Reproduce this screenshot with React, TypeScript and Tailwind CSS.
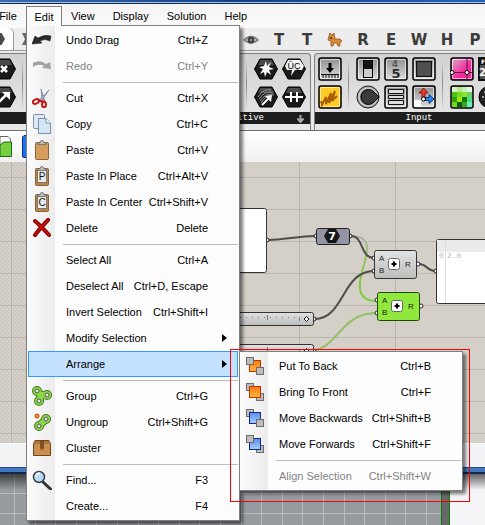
import type { ReactNode } from "react";

interface Entry {
  label: string;
  keys?: string;
  icon?: ReactNode;
  disabled?: boolean;
  active?: boolean;
  submenu?: Section[];
  arrow?: boolean;
}

type Section = Entry[];

const ArrowIcon = ({ back }: { back?: boolean }) => (
  <svg width="20" height="20" viewBox="0 0 20 20">
    {back ? (
      <path d="M1 7 Q8 3 14 8 L18 6 L19 13 L10 12 L12 10 Q7 7 1 11 Z" fill="#a2a2a2" />
    ) : (
      <path d="M19 6 Q12 4 6 8 L3 6 L0 14 L10 13 L8 11 Q13 8 18 11 Z" fill="#2b2b2b" stroke="#111" strokeWidth="0.5" />
    )}
  </svg>
);

const CutIcon = () => (
  <svg width="20" height="20" viewBox="0 0 20 20">
    <path d="M9 1 L13 13 L10 12 Z" fill="#8c9bb0" stroke="#6a7890" strokeWidth="0.6" />
    <path d="M17 2 L9 14 L7 12 Z" fill="#a9b6c8" stroke="#6a7890" strokeWidth="0.6" />
    <ellipse cx="4" cy="13.500" rx="3.300" ry="2" fill="none" stroke="#c81414" strokeWidth="2" transform="rotate(-25 4 13.500)" />
    <ellipse cx="12" cy="16.500" rx="2" ry="2.800" fill="none" stroke="#c81414" strokeWidth="2" />
    <path d="M6 12 L11 14" stroke="#c81414" strokeWidth="2" />
  </svg>
);

const CopyIcon = () => (
  <svg width="20" height="20" viewBox="0 0 20 20">
    <rect x="1.500" y="0.500" width="11" height="14" rx="1" fill="#dfe9f3" stroke="#7990a8" />
    <path d="M6.500 4.500 H14 L18.500 9 V19.500 H6.500 Z" fill="#d3e6f6" stroke="#7990a8" />
    <path d="M14 4.500 V9 H18.500" fill="#fff" stroke="#7990a8" />
  </svg>
);

const PasteIcon = ({ mark }: { mark?: string }) => (
  <svg width="20" height="20" viewBox="0 0 20 20">
    <rect x="3.500" y="2.500" width="13" height="17" rx="1" fill={mark ? "#b98548" : "#d69d5c"} stroke="#8d6230" />
    {mark && <rect x="5.500" y="4.500" width="9" height="12" fill="#ececec" stroke="#777" />}
    <path d="M5.500 4.500 V3 H8 Q8 0.500 10 0.500 Q12 0.500 12 3 H14.500 V4.500 Z" fill="#c4c4c4" stroke="#777" />
    {mark && (
      <text x="10" y="14" textAnchor="middle" fontSize="10" fontFamily="Liberation Sans, sans-serif" fill="#111">
        {mark}
      </text>
    )}
  </svg>
);

const DeleteIcon = () => (
  <svg width="20" height="20" viewBox="0 0 20 20">
    <path d="M3 3 Q9 8 17 17 M16 2 Q9 9 3 17" fill="none" stroke="#7d0000" strokeWidth="4" strokeLinecap="round" />
    <path d="M3 3 Q9 8 17 17 M16 2 Q9 9 3 17" fill="none" stroke="#c40c0c" strokeWidth="2" strokeLinecap="round" />
  </svg>
);

const GroupIcon = ({ split }: { split?: boolean }) => {
  const dots = split ? [[14, 7], [7, 14]] : [[5, 5], [15, 9], [7, 15]];
  const line = split ? "M14 7 L7 14" : "M5 5 L9 9 L15 9 M9 9 L7 15";
  return (
    <svg width="20" height="20" viewBox="0 0 20 20">
      <path d={line} fill="none" stroke="#3d7a17" strokeWidth="8" />
      {dots.map(([x, y]) => (
        <circle key={x} cx={x} cy={y} r="5" fill="#3d7a17" />
      ))}
      <path d={line} fill="none" stroke="#8dd645" strokeWidth="6" />
      {dots.map(([x, y]) => (
        <g key={x}>
          <circle cx={x} cy={y} r="4" fill="#8dd645" />
          <circle cx={x} cy={y} r="2" fill="#e4e4e4" stroke="#4d5b55" />
        </g>
      ))}
      {split && <circle cx="5" cy="4" r="2" fill="#ff8a1e" stroke="#c63c10" />}
    </svg>
  );
};

const ClusterIcon = () => (
  <svg width="20" height="20" viewBox="0 0 20 20">
    <path d="M3 2.500 H17 L18.500 6 V17.500 H1.500 V6 Z" fill="#cb8f51" stroke="#70441c" />
    <path d="M3 3 H17 L18 6 H2 Z" fill="#b0763c" />
    <path d="M8 3 H12 V12 L11 10 L10 13 L9 10 L8 12 Z" fill="#824f22" />
  </svg>
);

const FindIcon = () => (
  <svg width="20" height="20" viewBox="0 0 20 20">
    <path d="M11 12 L18.500 19" stroke="#333" strokeWidth="3" strokeLinecap="round" />
    <circle cx="7" cy="7" r="5.500" fill="#b7dcf8" stroke="#394048" strokeWidth="1.500" />
    <path d="M3.500 7 A3.500 3.500 0 0 1 8 3.500" stroke="#fff" strokeWidth="1.500" fill="none" />
  </svg>
);

// one coloured sheet stacked with two grey ones
const OrderIcon = ({ blue, over }: { blue?: boolean; over: "none" | "both" | "first" | "last" }) => {
  const id = blue ? "sheet-blue" : "sheet-orange";
  const first = <rect key="a" x="1.500" y="1.500" width="7" height="7" fill="#bdbdbd" stroke="#6c6c6c" />;
  const last = <rect key="b" x="11.500" y="11.500" width="7" height="7" fill="#bdbdbd" stroke="#6c6c6c" />;
  const sheet = (
    <rect key="c" x="4.500" y="4.500" width="11" height="11" fill={`url(#${id})`} stroke={blue ? "#142a80" : "#b43a00"} />
  );
  const order = {
    none: [sheet, first, last],
    both: [first, last, sheet],
    first: [first, sheet, last],
    last: [last, sheet, first],
  };
  return (
    <svg width="20" height="20" viewBox="0 0 20 20">
      <defs>
        <linearGradient id={id} x1="0" y1="0" x2="0" y2="1">
          <stop offset="0" stopColor={blue ? "#5a8cf0" : "#ff7a10"} />
          <stop offset="1" stopColor={blue ? "#a4d0ff" : "#ffb640"} />
        </linearGradient>
      </defs>
      {order[over]}
    </svg>
  );
};

const arrangeMenu: Section[] = [
  [
    { label: "Put To Back", keys: "Ctrl+B", icon: <OrderIcon over="none" /> },
    { label: "Bring To Front", keys: "Ctrl+F", icon: <OrderIcon over="both" /> },
    { label: "Move Backwards", keys: "Ctrl+Shift+B", icon: <OrderIcon blue over="first" /> },
    { label: "Move Forwards", keys: "Ctrl+Shift+F", icon: <OrderIcon blue over="last" /> },
  ],
  [{ label: "Align Selection", keys: "Ctrl+Shift+W", disabled: true }],
];

const editMenu: Section[] = [
  [
    { label: "Undo Drag", keys: "Ctrl+Z", icon: <ArrowIcon /> },
    { label: "Redo", keys: "Ctrl+Y", icon: <ArrowIcon back />, disabled: true },
  ],
  [
    { label: "Cut", keys: "Ctrl+X", icon: <CutIcon /> },
    { label: "Copy", keys: "Ctrl+C", icon: <CopyIcon /> },
    { label: "Paste", keys: "Ctrl+V", icon: <PasteIcon /> },
    { label: "Paste In Place", keys: "Ctrl+Alt+V", icon: <PasteIcon mark="P" /> },
    { label: "Paste In Center", keys: "Ctrl+Shift+V", icon: <PasteIcon mark="C" /> },
    { label: "Delete", keys: "Delete", icon: <DeleteIcon /> },
  ],
  [
    { label: "Select All", keys: "Ctrl+A" },
    { label: "Deselect All", keys: "Ctrl+D, Escape" },
    { label: "Invert Selection", keys: "Ctrl+Shift+I" },
    { label: "Modify Selection", arrow: true },
    { label: "Arrange", arrow: true, active: true, submenu: arrangeMenu },
  ],
  [
    { label: "Group", keys: "Ctrl+G", icon: <GroupIcon /> },
    { label: "Ungroup", keys: "Ctrl+Shift+G", icon: <GroupIcon split /> },
    { label: "Cluster", icon: <ClusterIcon /> },
  ],
  [
    { label: "Find...", keys: "F3", icon: <FindIcon /> },
    { label: "Create...", keys: "F4" },
  ],
];

const MenuRow = ({ entry }: { entry: Entry }) => (
  <li className="relative px-px">
    <button
      disabled={entry.disabled}
      className={`flex h-[26px] w-full items-center border text-left whitespace-nowrap ${
        entry.active ? "border-[#3399ff] bg-[#c4e1ff]" : "border-transparent"
      } ${entry.disabled ? "text-[#838383]" : "text-black"}`}
    >
      <span className="flex w-[26px] shrink-0 justify-center">{entry.icon}</span>
      <span className="flex-1 pl-[11px]">{entry.label}</span>
      <span>{entry.keys}</span>
      <span className="w-[29px] shrink-0 pl-[14px]">
        {entry.arrow && (
          <svg width="5" height="8" viewBox="0 0 5 8">
            <path d="M0 0 L5 4 L0 8 Z" />
          </svg>
        )}
      </span>
    </button>
    {entry.submenu && (
      <div className="absolute top-0 left-full">
        <Menu sections={entry.submenu} className="w-[224px]" />
        <div className="pointer-events-none absolute -top-[2px] -right-[7px] -bottom-[11px] -left-[9px] border border-[#ff0000]" />
      </div>
    )}
  </li>
);

const Menu = ({ sections, className }: { sections: Section[]; className: string }) => (
  <div
    className={`border border-[#808080] bg-[#fdfdfd] bg-linear-to-r from-[#fbfbfb] to-[#ececec] bg-[length:28px_100%] bg-no-repeat py-px shadow-[3px_3px_3px_rgba(0,0,0,0.5)] ${className}`}
  >
    {sections.map((section, i) => (
      <div key={i}>
        {i > 0 && (
          <div className="flex h-[6px] items-center pr-px pl-9">
            <hr className="w-full border-[#bdbdbd]" />
          </div>
        )}
        <ul>
          {section.map((entry) => (
            <MenuRow key={entry.label} entry={entry} />
          ))}
        </ul>
      </div>
    ))}
  </div>
);

const MenuBar = () => (
  <nav className="-ml-[10px] flex h-6 items-start bg-linear-to-b from-[#f4f4f4] to-[#fbfbfb] pt-[2px]">
    <button className="h-5 w-9">File</button>
    <div className="relative z-20">
      <button className="relative z-10 h-5 w-9 border border-b-0 border-[#808080] bg-[#fbfbfb]">Edit</button>
      <div className="absolute top-[19px] left-0">
        <Menu sections={editMenu} className="w-[214px]" />
      </div>
    </div>
    {["View", "Display", "Solution", "Help"].map((name) => (
      <button key={name} className="h-5 px-[9px]">{name}</button>
    ))}
  </nav>
);

const EyeIcon = () => (
  <svg width="16" height="12" viewBox="0 0 16 12">
    <path d="M1 6 Q8 -1 15 6 Q8 12 1 6 Z" fill="#d0d0d0" stroke="#777" strokeWidth="1.500" />
    <circle cx="8" cy="6" r="3.500" fill="#444" />
    <circle cx="8" cy="6" r="1" fill="#aaa" />
  </svg>
);

const Deer = () => (
  <svg width="16" height="16" viewBox="0 0 16 16">
    <path d="M2 4 L3 1 L5 3 L7 1 L8 7 L13 7 L15 9 L13 10 L13 14 L11 14 L10 11 L7 11 L6 14 L4 14 L4 9 L1 8 Z" fill="#d98a34" stroke="#92551c" strokeWidth="0.800" />
    <circle cx="4" cy="6" r="1" fill="#333" />
  </svg>
);

const tabs: ReactNode[] = ["", "", "", "", "", "", "", <EyeIcon />, "T", "T", <Deer />, "R", "E", "W", "H", "P"];

const TabStrip = () => (
  <div className="flex h-[23px] overflow-hidden border-b border-[#999] bg-[#ededed]">
    <button aria-label="Params" className="-ml-[15px] flex w-[29px] shrink-0 items-center justify-end rounded-tr-md border-r border-[#999] bg-white pr-[8px]">
      <svg width="13" height="12" viewBox="0 0 13 12">
        <path d="M3.500 0 H9.500 L13 6 L9.500 12 H3.500 L0 6 Z" fill="#4a4a4a" />
      </svg>
    </button>
    <button aria-label="Maths" className="flex w-[27px] shrink-0 items-center pl-[7px]">
      <svg width="14" height="12" viewBox="0 0 14 12">
        <path d="M1 0 H5 L7 3 L9 0 H13 L9 6 L13 12 H9 L7 9 L5 12 H1 L4 6 Z" fill="#666" />
      </svg>
    </button>
    {tabs.map((tab, i) => (
      <button
        key={i}
        className="flex w-7 shrink-0 items-center justify-center pt-px font-['DejaVu_Sans'] text-[15px] leading-[22px] font-bold text-[#3b3b3b]"
      >
        {tab}
      </button>
    ))}
  </div>
);

const Hex = ({ children }: { children?: ReactNode }) => (
  <svg width="24" height="24" viewBox="0 0 24 24">
    <path d="M6 2 H18 L23.500 12 L18 22 H6 L0.500 12 Z" fill="#1a1a1a" stroke="#000" strokeLinejoin="round" />
    <path d="M6.500 3 H17.500 L20 8 H4 Z" fill="#4a4a4a" />
    {children}
  </svg>
);

const Tile = ({ fill = "url(#tile-grey)", children }: { fill?: string; children?: ReactNode }) => (
  <svg width="24" height="24" viewBox="0 0 24 24">
    <defs>
      <linearGradient id="tile-grey" x1="0" y1="0" x2="0" y2="1">
        <stop offset="0" stopColor="#8f8f8f" />
        <stop offset="1" stopColor="#dedede" />
      </linearGradient>
      <linearGradient id="tile-pink" x1="0" y1="0" x2="1" y2="1">
        <stop offset="0" stopColor="#d8b4c8" />
        <stop offset="0.600" stopColor="#f4289c" />
        <stop offset="1" stopColor="#ff2ca0" />
      </linearGradient>
    </defs>
    <rect x="1" y="1" width="22" height="22" rx="2" fill={fill} stroke="#000" strokeWidth="1.500" />
    <rect x="2.500" y="2.500" width="19" height="19" rx="1" fill="none" stroke="#fff" strokeOpacity="0.600" />
    {children}
  </svg>
);

const greens = ["#d9f5c8", "#b3e886", "#c9f0b8", "#e4fae0", "#4fc318", "#76dc1c", "#8ce22e", "#69d06a", "#2ea30d", "#a4e80c", "#137a0c", "#4fe07c", "#74d81c", "#0b5a0a", "#38a818", "#66f0b8"];

const Knob = () => (
  <svg width="24" height="24" viewBox="0 0 24 24">
    <circle cx="12" cy="12" r="11" fill="#a4a4a4" stroke="#222" />
    <circle cx="12" cy="12" r="9" fill="none" stroke="#ddd" />
    <path d="M18 7 L23 12 L18 17 A7.500 7.500 0 1 1 18 7 Z" fill="#3a3a3a" stroke="#000" />
  </svg>
);

const IconColumn = ({ icons }: { icons: ReactNode[] }) => (
  <div className="flex shrink-0 flex-col gap-1">
    {icons.map((icon, i) => (
      <button key={i} className="h-6 w-6">{icon}</button>
    ))}
  </div>
);

const Divider = () => <div className="w-px shrink-0 bg-linear-to-b from-[#ddd] via-[#8a8a8a] to-[#ddd]" />;

const PanelTitle = ({ children }: { children: ReactNode }) => (
  <div className="flex h-3 items-center bg-[#1e1e1e] font-['Liberation_Mono'] text-[9px] leading-3 text-white">
    {children}
  </div>
);

const PrimitivePanel = () => (
  <section className="w-[311px] shrink-0 overflow-hidden rounded-tr border-t border-r border-[#808080] bg-linear-to-b from-[#d2d2d2] to-[#e9e9e9]">
    <div className="-ml-2 flex h-[58px] justify-between pt-[3px] pr-1">
      <div className="flex h-[52px] gap-[6px]">
        <IconColumn
          icons={[
            <Hex><path d="M9 9 L15 15 M15 9 L9 15" stroke="#fff" strokeWidth="2.500" /></Hex>,
            <Hex>
              <path d="M7 17 L14 10" stroke="#fff" strokeWidth="2.500" />
              <path d="M10 7 H18 V15 Z" fill="#fff" />
            </Hex>,
          ]}
        />
        <Divider />
      </div>
      <div className="flex h-[52px] gap-1">
        <div className="mr-[3px] flex"><Divider /></div>
        <IconColumn
          icons={[
            <Hex>
              <path d="M12 4 L13 9 L17 5 L15 10 L20 12 L15 13 L17 18 L13 15 L11 20 L10 15 L6 17 L9 12 L5 10 L10 9 Z" fill="#fff" />
            </Hex>,
            <Hex>
              <path d="M4 12 Q10 3 17 5 M5 14 Q11 5 19 8 M6 16 Q12 7 20 10 M7 18 Q12 10 16 11" stroke="#999" fill="none" />
              <path d="M8 20 L16 12" stroke="#fff" strokeWidth="2" />
              <path d="M11 11 L18 10 L17 17 Z" fill="#fff" />
            </Hex>,
          ]}
        />
        <IconColumn
          icons={[
            <Hex>
              <path d="M6 3 H18 L22 9 L20 13 H13 L9 19 L10 13 H5 L3 9 Z" fill="#f4f4f4" />
              <text x="12" y="12" textAnchor="middle" fontSize="9" fontFamily="Liberation Sans, sans-serif">ÜÇ</text>
            </Hex>,
            <Hex><path d="M3 12 H21 M9 7 V17 M15 7 V17" stroke="#fff" strokeWidth="2" /></Hex>,
          ]}
        />
      </div>
    </div>
    <PanelTitle>
      <span className="flex-1 pr-[32px] text-right">Primitive</span>
      <span className="w-[14px]">
        <svg width="9" height="9" viewBox="0 0 9 9">
          <path d="M4.500 1 V7 M1.500 4.500 L4.500 8 L7.500 4.500" stroke="#aaa" strokeWidth="2" fill="none" />
        </svg>
      </span>
    </PanelTitle>
  </section>
);

const InputPanel = () => (
  <section className="min-w-0 flex-1 overflow-hidden rounded-tl border-t border-l border-[#808080] bg-linear-to-b from-[#d2d2d2] to-[#e9e9e9]">
    <div className="flex h-[58px] pt-[3px] pl-[3px]">
      <div className="flex h-[52px] gap-1">
        <IconColumn
          icons={[
            <Tile>
              <path d="M3 17.500 H21 M5 18 V21 M8 18 V21 M11 18 V21 M14 18 V21 M17 18 V21 M20 18 V21" stroke="#111" />
              <path d="M10.500 6 H13.500 V11 H16 L12 16 L8 11 H10.500 Z" />
            </Tile>,
            <Tile fill="#ffcc26"><path d="M3 16 L4 20 L8 12 L8 19 L13 8 L11 18 L17 6 L14 16 L19 11" stroke="#a95c00" strokeWidth="2" fill="none" /></Tile>,
          ]}
        />
        <div className="mr-[3px] ml-[2px] flex"><Divider /></div>
        <IconColumn
          icons={[
            <Tile>
              <rect x="7.500" y="3.500" width="9" height="17" fill="#ccc" stroke="#000" />
              <rect x="8" y="4" width="8" height="8" fill="#151515" />
            </Tile>,
            <Knob />,
          ]}
        />
        <IconColumn
          icons={[
            <Tile>
              <g fontFamily="DejaVu Sans, sans-serif" fontWeight="bold" textAnchor="middle">
                <text x="11" y="10" fontSize="9" fill="#5a5a5a">4</text>
                <text x="12" y="21" fontSize="13" fill="#2c2c2c">5</text>
              </g>
            </Tile>,
            <Tile><path d="M4.500 4.500 H19.500 V8.500 H4.500 Z M4.500 10.500 H19.500 V13.500 H4.500 Z M4.500 15.500 H19.500 V19.500 H4.500 Z" fill="#ddd" stroke="#111" /></Tile>,
          ]}
        />
        <IconColumn
          icons={[
            <Tile><rect x="4.500" y="4.500" width="15" height="15" fill="#444" stroke="#111" /><rect x="6" y="6" width="12" height="12" fill="#505050" /></Tile>,
            <Tile>
              <path d="M2 15 H9 V22 H2 Z" fill="#fff" />
              <path d="M10 13 V8 H7 L11.500 3 L16 8 H13 V13 Z" fill="#e8372c" stroke="#8e1510" />
              <path d="M12 12.500 H17 V9.500 L22 14 L17 18.500 V15.500 H12 Z" fill="#2b83e8" stroke="#0b3c80" />
              <circle cx="11.500" cy="14" r="2" fill="#fff" stroke="#000" />
            </Tile>,
          ]}
        />
        <div className="mr-[3px] ml-[2px] flex"><Divider /></div>
        <IconColumn
          icons={[
            <Tile fill="url(#tile-pink)">
              <path d="M2 15.500 H22 M17 2 V22" stroke="#5c1440" />
              <circle cx="2" cy="15.500" r="2" fill="#fff" stroke="#000" />
              <circle cx="17" cy="15.500" r="2" fill="#fff" stroke="#000" />
            </Tile>,
            <Tile>
              {greens.map((c, i) => (
                <rect key={i} x={2 + (i % 4) * 5} y={2 + Math.floor(i / 4) * 5} width="5" height="5" fill={c} />
              ))}
            </Tile>,
          ]}
        />
        <IconColumn
          icons={[
            <svg width="24" height="24" viewBox="0 0 24 24">
              <rect width="24" height="24" fill="#111" />
              <rect x="2" y="8" width="20" height="14" fill="#555" />
              <g fontFamily="DejaVu Sans, sans-serif" fontWeight="bold" fill="#fff">
                <text x="3" y="7" fontSize="6">F</text>
                <text x="1" y="19" fontSize="10">2</text>
              </g>
            </svg>,
            <svg width="24" height="24" viewBox="0 0 24 24">
              <circle cx="12" cy="12" r="11" fill="#222" stroke="#000" />
              <circle cx="5" cy="12" r="1" fill="#ccc" />
              <circle cx="7" cy="7" r="1" fill="#ccc" />
            </svg>,
          ]}
        />
      </div>
    </div>
    <PanelTitle>
      <span className="flex-1 pl-[38px] text-center">Input</span>
    </PanelTitle>
  </section>
);

const FileBar = () => (
  <div className="flex h-[31px] bg-linear-to-b from-white to-[#f1f1f1] pt-1">
    <svg width="26" height="24" viewBox="0 0 26 24">
      <path d="M0 1.500 H8 L10.500 4 V10 H0 Z" fill="#fff" stroke="#666" />
      <path d="M0 10 L4 7 H11.500 V21.500 H0 Z" fill="#76cf3c" stroke="#1c6b12" />
      <path d="M24 0.500 H36 V22.500 H24 Q22.500 22.500 22.500 21 V2 Z" fill="#1c74ea" stroke="#0a2c8c" />
    </svg>
  </div>
);

const Port = ({ x, y }: { x: number; y: number }) => <circle cx={x} cy={y} r="2" fill="#fff" stroke="#222" />;

const Adder = ({ x, y, green }: { x: number; y: number; green?: boolean }) => (
  <g transform={`translate(${x} ${y})`} fontFamily="Liberation Sans, sans-serif" fontSize="8" fill="#222">
    <Port x={0} y={8} />
    <Port x={0} y={21} />
    <Port x={44} y={14} />
    <rect x="0.500" y="0.500" width="42" height="28" rx="2" fill={green ? "#90e83c" : "url(#node)"} stroke={green ? "#1c4a08" : "#333"} />
    <rect x="14.500" y="8.500" width="11" height="11" rx="2" fill="#fff" stroke="#666" />
    <path d="M17.500 14 H22.500 M20 11.500 V16.500" stroke="#000" strokeWidth="2" />
    <text x="5" y="11">A</text>
    <text x="5" y="23">B</text>
    <text x="31" y="17">R</text>
  </g>
);

const Slider = ({ y }: { y: number }) => (
  <g transform={`translate(0 ${y})`}>
    <Port x={314} y={7} />
    <rect x="100.500" y="0.500" width="213" height="13" rx="2" fill="url(#node)" stroke="#333" />
    <path d="M240 5.500 H300" stroke="#777" strokeDasharray="1 5" />
    <path d="M267.500 3 V8 M299.500 5 V9" stroke="#777" />
    <path d="M306.500 4.500 L309 7 L306.500 9.500 L304 7 Z" fill="#fff" stroke="#111" />
  </g>
);

const Canvas = () => (
  <svg className="block h-[281px] w-full">
    <defs>
      <pattern id="grid" width="96" height="32" x="11" y="15" patternUnits="userSpaceOnUse">
        <path d="M0.500 0 V32 M0 0.500 H96" stroke="#bab6af" />
      </pattern>
      <pattern id="hatch" width="4" height="4" patternUnits="userSpaceOnUse">
        <path d="M-1 1 L1 -1 M0 4 L4 0 M3 5 L5 3" stroke="#c6c2b9" />
      </pattern>
      <linearGradient id="node" x1="0" y1="0" x2="0" y2="1">
        <stop offset="0" stopColor="#e2e2e2" />
        <stop offset="1" stopColor="#bdbdbd" />
      </linearGradient>
      <linearGradient id="fade" x1="0" y1="0" x2="0" y2="1">
        <stop offset="0" stopColor="#a9b59c" />
        <stop offset="0.700" stopColor="#80cc3a" />
      </linearGradient>
    </defs>
    <rect width="100%" height="100%" fill="#d4d0c8" />
    <rect width="100" height="100%" fill="url(#hatch)" />
    <rect width="100%" height="100%" fill="url(#grid)" />
    <g fill="none" strokeWidth="2">
      <path d="M351 74 C374 74 367 92 362 110 C357 128 360 139 376 139" stroke="url(#fade)" />
      <path d="M315 188 C338 184 342 151 376 151" stroke="#8fc064" />
      <g stroke="#4f4c49">
        <path d="M268 78 C284 78 298 74 315 74" />
        <path d="M351 74 C364 74 360 96 374 96" />
        <path d="M315 157 C344 157 342 109 374 109" />
        <path d="M419 102 C427 102 427 109 435 109" />
      </g>
    </g>
    <Port x={267} y={78} />
    <rect x="150.500" y="46.500" width="116" height="64" rx="2" fill="#fff" stroke="#333" />
    <Port x={316} y={74} />
    <Port x={350} y={74} />
    <rect x="316.500" y="66.500" width="33" height="16" rx="2" fill="#9594a6" stroke="#222" />
    <path d="M328 67 H336 L340 74 L336 81 H328 L324 74 Z" fill="#161616" />
    <text x="332" y="78" textAnchor="middle" fontFamily="DejaVu Sans, sans-serif" fontSize="11" fontWeight="bold" fill="#fff">7</text>
    <Adder x={374} y={88} />
    <Adder x={377} y={130} green />
    <Slider y={150} />
    <Slider y={182} />
    <Port x={436} y={109} />
    <rect x="436.500" y="77.500" width="200" height="64" rx="2" fill="#fff" stroke="#333" />
    <path d="M437 78 H636 V90 H437 Z" fill="#ebebeb" />
    <path d="M445.500 78 V141" stroke="#ddd" />
    <g fontFamily="Liberation Mono, monospace" fontSize="8" fill="#bbb">
      <text x="439" y="96">0</text>
      <text x="447" y="96">2.0</text>
    </g>
  </svg>
);

// Rhino viewport that shows under the editor window
const Viewport = () => (
  <div className="relative flex min-h-[50px] flex-1 overflow-hidden bg-[#f5f5f8]">
    <svg className="h-[52px] w-[451px]">
      <rect width="100%" height="100%" fill="#979ba0" />
      {Array.from({ length: 22 }, (_, i) => (
        <path key={i} d={`M${14.500 + Math.round(i * 20.600)} 0 V52`} stroke="#b9bcbf" />
      ))}
      <path d="M0 19.500 H441 M0 39.500 H441" stroke="#b9bcbf" />
      <rect x="441" width="9" height="52" fill="#686868" />
      <path d="M441.500 0 V52 M449.500 0 V52" stroke="#0a7a0a" />
      <rect x="450" width="1" height="52" fill="#f5f5f8" />
    </svg>
    <div className="absolute inset-x-0 top-0 h-4 bg-linear-to-b from-black/60 to-transparent" />
  </div>
);

export default function App() {
  return (
    <div className="flex min-h-screen flex-col overflow-hidden bg-[#f0f0f0] font-['Liberation_Sans',Arial,sans-serif] text-[11px] leading-[18px] text-black">
      <div className="h-1 border-b border-[#13294b] bg-linear-to-r from-[#3b6cae] via-[#12408a] to-[#2a62b4] pt-[2px]">
        <div className="h-px bg-[#a9c4e4]" />
      </div>
      <MenuBar />
      <TabStrip />
      <div className="flex h-[79px] gap-[3px] bg-[#e8e8e8] pt-[2px]">
        <PrimitivePanel />
        <InputPanel />
      </div>
      <div className="h-px bg-[#6f6f6f]" />
      <FileBar />
      <Canvas />
      <footer className="h-6 border-t border-white bg-[#f3f3f5]" />
      <div className="h-[7px] border-t border-b-2 border-t-[#24487c] border-b-[#14284c] bg-[#4279c0]" />
      <Viewport />
    </div>
  );
}
